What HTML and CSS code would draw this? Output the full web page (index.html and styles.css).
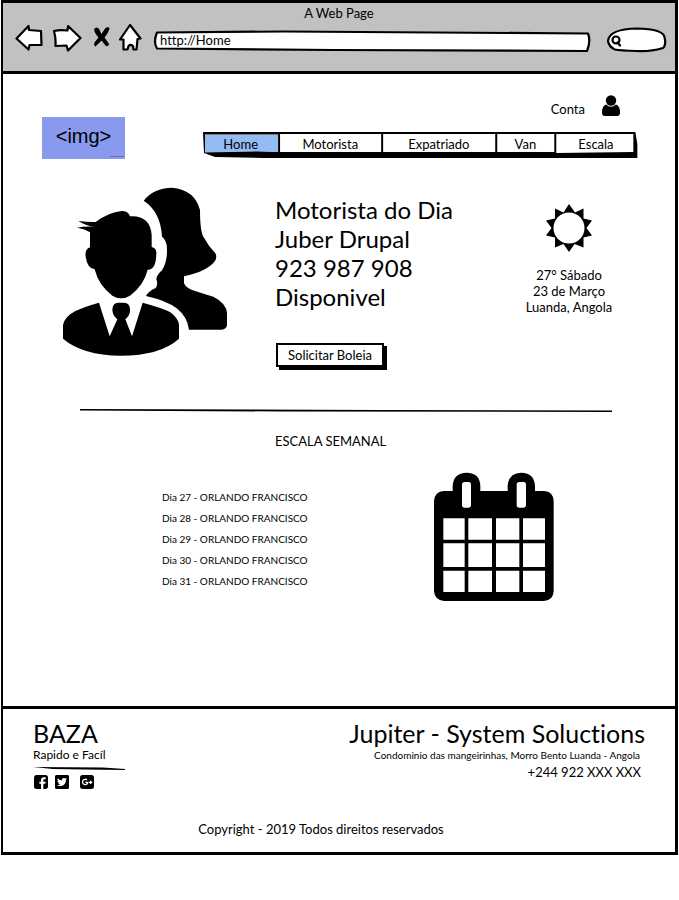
FILE: index.html
```html
<!DOCTYPE html>
<html lang="pt">
<head>
<meta charset="utf-8">
<meta name="viewport" content="width=device-width, initial-scale=1">
<title>A Web Page</title>
<link rel="stylesheet" href="styles.css">
</head>
<body>
<div class="browser">
  <header class="chrome">
    <div class="chrome-title">A Web Page</div>
    <div class="toolbar">
      <button class="tool" type="button" aria-label="Back">
        <svg width="29" height="28" viewBox="0 0 29 28"><path class="ink" d="M1.500 14.500L13.500 2L14 6L26 7L26.500 21L14.500 21L13.500 25.500Z"/></svg>
      </button>
      <button class="tool" type="button" aria-label="Forward">
        <svg width="29" height="28" viewBox="0 0 29 28"><path class="ink" d="M1 7Q7 5.500 14.500 6.500L15 2L27.500 14L15 26.500L13.500 21.500L2.500 22Q3 14 1 7Z"/></svg>
      </button>
      <button class="tool" type="button" aria-label="Stop">
        <svg width="19" height="28" viewBox="0 0 19 28"><path d="M3 5Q6 2 8 5L10.500 10L14 4.500Q17 2.500 18.500 4Q18 8 13.500 13.500Q16 17 18 20Q17 23.500 14.500 21.500L10.500 16.500Q7 20 4.500 22.500Q2.500 22 3.500 18.500L7.500 13.500Q3.500 9.500 3 5Z"/></svg>
      </button>
      <button class="tool" type="button" aria-label="Home">
        <svg width="23" height="28" viewBox="0 0 23 28"><path class="ink" d="M11 1L21.500 14.500L18.500 15L17.500 25.500L14.500 25.500L14 22Q11.500 20 9.500 22L8.500 25.500L4.500 25.500L4.500 15.500L1 15.500Z"/></svg>
      </button>
      <div class="address">
        <svg class="outline" viewBox="0 0 438 24" preserveAspectRatio="none"><path class="ink" d="M3 3.500L130 2.500L435 4.500Q438 12 434 22L180 21L3 19.500Q-1 13 3 3.500Z"/></svg>
        <input class="address-input" type="text" value="http://Home" aria-label="Address">
      </div>
      <div class="search">
        <svg class="outline" viewBox="0 0 60 26" preserveAspectRatio="none"><path class="ink" d="M1 14Q2 2 30 1.500Q56 2 57.500 10Q59.500 18 56 21Q42 25 30 24Q12 23.500 8 22.500Q2 20 1 14Z"/></svg>
        <svg class="lens" width="12" height="12" viewBox="0 0 12 12"><circle class="ink" cx="5" cy="5" r="3.500"/><path class="ink" d="M6.500 7.500L9 10.500"/></svg>
        <input class="search-input" type="search" aria-label="Search">
      </div>
    </div>
  </header>

  <main class="page">
    <div class="top">
      <div class="logo">&lt;img&gt;<span class="logo-mark"></span></div>
      <div class="top-right">
        <a class="account" href="#conta"><span>Conta</span>
          <svg width="18" height="22" viewBox="0 0 18 22"><circle cx="9" cy="5.500" r="5.200"/><path d="M4 9.500Q9 14 14 9.500Q18 11 18 17.500Q18 21 15 21H3Q0 21 0 17.500Q0 11 4 9.500Z"/></svg>
        </a>
        <nav class="menu">
          <svg class="outline" viewBox="0 0 434 26" preserveAspectRatio="none"><path fill-rule="evenodd" d="M0 0H432L434 12V26H60L12 25L1 21ZM2 2.500V20L55 19L75 20V2.500ZM77 2V20H178V2ZM180 2V20H292V2ZM294 2V20H351V2ZM353 2V21L430 20V2Z"/><path class="active" d="M2 3V20.500L55 19.500L75 20V3Z"/></svg>
          <a href="#home">Home</a><a href="#motorista">Motorista</a><a href="#expatriado">Expatriado</a><a href="#van">Van</a><a href="#escala">Escala</a>
        </nav>
      </div>
    </div>

    <section class="hero">
      <svg class="people" viewBox="36 36 498 510" role="img" aria-label="Motoristas">
        <path d="M281 77Q310 39 366 38Q435 45 450 105Q450 175 463 190Q476 215 496 235Q502 245 495 258Q470 290 402 304V325Q408 340 435 348L490 365Q530 385 531 415V450Q529 463 515 464H417Q412 425 380 400Q350 377 288 363Q294 350 317 339Q325 328 319 312Q322 297 336 286Q355 255 350 210Q346 192 336 185Q332 110 281 77Z"/>
        <path d="M85 138Q115 142 137 141Q175 112 215 108Q235 108 240 124Q300 120 305 180V216Q318 219 319 232Q319 285 293 284Q282 330 240 362Q213 378 187 362Q145 330 134 283Q112 280 107 245Q104 222 120 217V172Q105 162 82 158Q103 153 132 155Q107 152 85 138Z"/>
        <path d="M147 383L179 484L202 433Q187 420 187 405Q188 383 204 383H224Q241 386 240 405Q240 422 226 433L246 484L278 383Q340 400 360 411Q386 430 387 450V491Q330 542 212 542Q98 541 39 491V450Q44 425 75 409Q100 396 147 383Z"/>
      </svg>
      <div class="driver">
        <p class="driver-info">Motorista do Dia<br>Juber Drupal<br>923 987 908<br>Disponivel</p>
        <button class="cta" type="button">Solicitar Boleia</button>
      </div>
      <div class="weather">
        <svg width="46" height="48" viewBox="0 0 46 48"><path d="M23 0L29 8.500L37.500 4.500V14.500L46 16.500L40.500 24L46 31.500L37.500 33.500V43.500L28.500 40L23 48L17.500 40L9 43.500V33.500L0 31.500L5.500 24L0 16.500L9 14.500V4.500L17.500 8.500Z"/><circle class="sun-core" cx="23" cy="24" r="15.500"/></svg>
        <p class="weather-info">27° Sábado<br>23 de Março<br>Luanda, Angola</p>
      </div>
    </section>

    <svg class="divider" viewBox="0 0 532 3" preserveAspectRatio="none"><path d="M0 0L300 1L532 1.500V3L200 2.500L0 1.500Z"/></svg>

    <h2 class="schedule-title">ESCALA SEMANAL</h2>
    <section class="schedule">
      <ul class="days">
        <li>Dia 27 - ORLANDO FRANCISCO</li>
        <li>Dia 28 - ORLANDO FRANCISCO</li>
        <li>Dia 29 - ORLANDO FRANCISCO</li>
        <li>Dia 30 - ORLANDO FRANCISCO</li>
        <li>Dia 31 - ORLANDO FRANCISCO</li>
      </ul>
      <svg class="calendar" viewBox="42 36 360 390" role="img" aria-label="Calendário">
        <path fill-rule="evenodd" d="M72 93H98V78Q100 39 140 38Q180 39 181 78V93H263V78Q265 39 304 38Q343 39 345 78V93H372Q400 95 401 123V393Q400 421 372 423H72Q44 421 42 393V123Q44 95 72 93ZM134 66Q126 66 126 74V136Q126 143 134 143H146Q153 143 153 136V74Q153 66 146 66ZM298 66Q290 66 290 74V136Q290 143 298 143H311Q318 143 318 136V74Q318 66 311 66ZM70 175V239H134V175ZM145 175V239H216V175ZM228 175V239H298V175ZM309 175V239H375V175ZM70 250V321H134V250ZM145 250V321H216V250ZM228 250V321H298V250ZM309 250V321H375V250ZM70 332V396H134V332ZM145 332V396H216V332ZM228 332V396H298V332ZM309 332V396H375V332Z"/>
      </svg>
    </section>
  </main>

  <footer class="footer">
    <div class="footer-row">
      <div class="brand">
        <div class="big">BAZA</div>
        <div class="tagline">Rapido e Facíl</div>
        <svg class="rule" viewBox="0 0 92 3" preserveAspectRatio="none"><path d="M0 0L70 0.500L92 2V3L50 2.500L20 2Z"/></svg>
        <div class="social">
          <a href="#facebook" aria-label="Facebook"><svg width="14" height="14" viewBox="0 0 42 42"><rect width="42" height="42" rx="8"/><path class="cut" d="M21 42V26H16V20H21V15Q21 7 29 6.500H35V13H31Q28 13 28 16V20H35L34 26H28V42Z"/></svg></a>
          <a href="#twitter" aria-label="Twitter"><svg width="14" height="14" viewBox="0 32 448 448"><path d="M400 32H48C21.500 32 0 53.500 0 80v352c0 26.500 21.500 48 48 48h352c26.500 0 48-21.500 48-48V80c0-26.500-21.500-48-48-48zm-48.900 158.800c.2 2.800.2 5.700.2 8.500 0 86.700-66 186.600-186.600 186.600-37.200 0-71.700-10.800-100.700-29.400 5.300.6 10.400.8 15.800.8 30.700 0 58.900-10.400 81.400-28-28.800-.6-53-19.500-61.300-45.500 10.100 1.500 19.200 1.500 29.600-1.200-30-6.100-52.500-32.500-52.500-64.400v-.8c8.700 4.900 18.900 7.900 29.600 8.300a65.447 65.447 0 0 1-29.200-54.600c0-12.200 3.200-23.400 8.900-33.100 32.300 39.800 80.800 65.800 135.200 68.600-9.300-44.500 24-80.600 64-80.600 18.900 0 35.900 7.900 47.900 20.700 14.800-2.800 29-8.300 41.600-15.800-4.900 15.200-15.200 28-28.800 36.100 13.200-1.400 26-5.100 37.800-10.200-8.900 13.100-20.100 24.700-32.900 34z"/></svg></a>
          <a class="google" href="#google" aria-label="Google Plus"><svg width="14" height="14" viewBox="0 0 42 42"><rect width="42" height="42" rx="8"/><path class="line" d="M21 15A8 8 0 1 0 23.500 22H16M32 17V27M27 22H37"/></svg></a>
        </div>
      </div>
      <address class="company">
        <div class="big">Jupiter - System Soluctions</div>
        <div class="street">Condominio das mangeirinhas, Morro Bento Luanda - Angola</div>
        <div class="phone">+244 922 XXX XXX</div>
      </address>
    </div>
    <p class="copyright">Copyright - 2019 Todos direitos reservados</p>
  </footer>
</div>
</body>
</html>
```
FILE: styles.css
```css
* { box-sizing: border-box; }
body {
  margin: 0;
  background: #fff;
  color: #000;
  font: 13px/16px Lato, "Open Sans", sans-serif;
  font-variant-ligatures: none;
}
p, h2, ul { margin: 0; padding: 0; }
a { color: inherit; text-decoration: none; }
svg { display: block; }
input, button { font: inherit; color: inherit; font-variant-ligatures: none; }

.ink { fill: #fff; stroke: #000; stroke-width: 2.2; stroke-linejoin: round; stroke-linecap: round; vector-effect: non-scaling-stroke; }
.outline { position: absolute; inset: 0; width: 100%; height: 100%; overflow: visible; }

.browser { margin: 0 1px; border: 3px solid #000; border-left-width: 2px; }

.chrome { background: #c1c1c1; border-bottom: 3px solid #000; padding: 2px 8px 18px 12px; }
.chrome-title { text-align: center; line-height: 17px; padding-right: 4px; }
.toolbar { display: flex; align-items: center; gap: 9px; margin-top: 1px; }
.tool { border: 0; background: none; padding: 0; flex: none; }
.address { position: relative; flex: 1; min-width: 0; height: 24px; margin: 5px 7px 0 3px; }
.address-input, .search-input { position: relative; display: block; width: 100%; height: 100%; border: 0; background: none; outline: 0; padding: 0 6px 2px; }
.search { position: relative; flex: none; width: 60px; height: 26px; margin-top: 4px; }
.search-input { padding-left: 18px; }
.lens { position: absolute; left: 4px; top: 8px; }

.page { padding: 21px 38px 104px 39px; }
.top { display: flex; justify-content: space-between; }
.logo { position: relative; width: 83px; height: 42px; margin-top: 22px; background: #8899ee; font: 20px/38px "Liberation Sans", sans-serif; text-align: center; }
.logo-mark { position: absolute; right: 1px; bottom: 2px; width: 14px; height: 1px; background: #6672b8; }
.top-right { width: 73%; }
.account { display: flex; justify-content: flex-end; align-items: flex-end; gap: 17px; height: 22px; padding-right: 17px; margin-bottom: 15px; }
.menu { position: relative; display: grid; grid-template-columns: 76fr 103fr 114fr 59fr 82fr; height: 26px; text-align: center; line-height: 24px; }
.menu a { position: relative; }
.active { fill: #94bbf2; }

.hero { display: grid; grid-template-columns: 213px 1fr 120px; margin: 28px 8px 0 20px; }
.people { width: 166px; height: 170px; }
.driver { padding-top: 8px; }
.driver-info { font-size: 24px; line-height: 29px; }
.cta { display: block; height: 24px; margin: 32px 0 0 1px; padding: 0 10px; background: #fff; border: 2px solid #000; box-shadow: 3px 3px 0 #000; line-height: 18px; }
.weather { padding-top: 17px; text-align: center; }
.weather svg { margin: 0 auto 15px; }
.sun-core { fill: #fff; }

.divider { width: calc(100% - 63px); height: 3px; margin: 42px 0 0 38px; }
.schedule-title { font-size: 13px; font-weight: 400; line-height: 16px; margin: 21px 0 0 233px; }
.schedule { display: flex; justify-content: space-between; padding: 0 83px 0 120px; margin-top: 23px; }
.days { list-style: none; font-size: 10px; line-height: 21px; padding-top: 15px; }
.calendar { width: 120px; height: 130px; flex: none; }

.footer { border-top: 3px solid #000; padding: 9px 30px 15px; }
.footer-row { display: flex; justify-content: space-between; }
.big { font-size: 25px; line-height: 30px; }
.tagline { font-size: 12px; line-height: 14px; }
.rule { width: 92px; height: 3px; margin: 5px 0; }
.social { display: flex; gap: 7px; padding-left: 1px; }
.google { margin-left: 4px; }
.cut { fill: #fff; }
.line { fill: none; stroke: #fff; stroke-width: 4; }
.company { font-style: normal; text-align: right; }
.street { font-size: 10px; line-height: 14px; padding-right: 5px; }
.phone { line-height: 16px; margin-top: 2px; padding-right: 4px; }
.copyright { text-align: center; margin-top: 32px; padding-right: 36px; }
```
